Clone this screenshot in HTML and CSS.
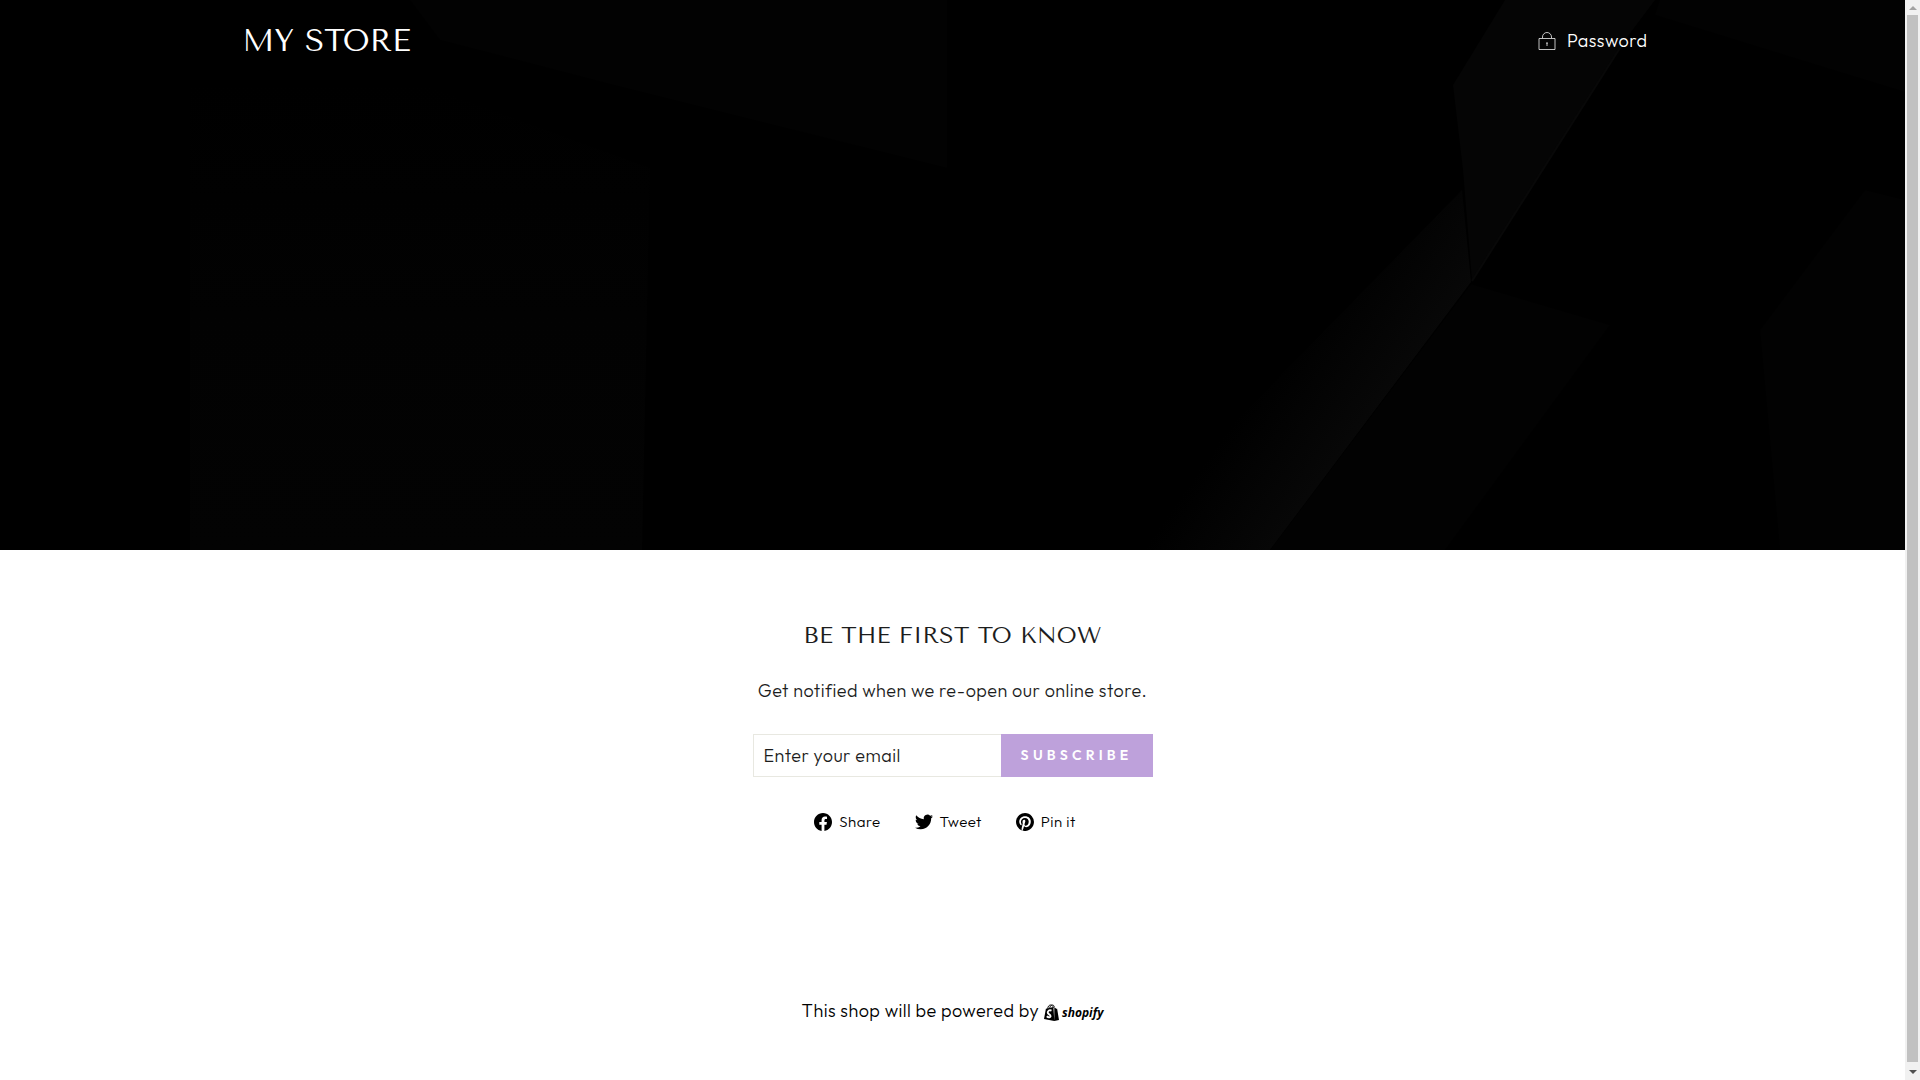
FILE: index.html
```
<!DOCTYPE html>
<html lang="en">
<head>
  <meta charset="UTF-8">
  <meta name="viewport" content="width=device-width, initial-scale=1">
  <title>My Store</title>
  <link rel="stylesheet" href="styles.css">
</head>
<body>
  <div class="page">
    <div class="hero">
      <svg class="hero-image" viewBox="0 0 1905 550" preserveAspectRatio="xMidYMid slice" aria-hidden="true">
        <defs>
          <linearGradient id="glow" gradientUnits="userSpaceOnUse" x1="1270" y1="370" x2="1378" y2="446">
            <stop offset="0" stop-color="#000"/>
            <stop offset="1" stop-color="#090909"/>
          </linearGradient>
          <linearGradient id="wall" x1="0" y1="0" x2="0" y2="1">
            <stop offset="0" stop-color="#000"/>
            <stop offset="0.5" stop-color="#020202"/>
            <stop offset="1" stop-color="#030303"/>
          </linearGradient>
        </defs>
        <path fill="#020202" d="M410 0h537v168L610 84 440 40z"/>
        <path fill="url(#wall)" d="M190 82h225l235 86-8 382H190z"/>
        <path fill="url(#glow)" d="M1462 190l9 92-201 268h-160z"/>
        <path fill="#050505" d="M1505 0h150l-30 40-153 241-9-111-10-85z"/>
        <path stroke="#080808" stroke-width="2" d="M1625 40l-153 241"/>
        <path fill="#020202" d="M1471 284l139 41-165 225h-175z"/>
        <path fill="#020202" d="M1655 15l250 77V0h-245z"/>
        <path fill="#020202" d="M1865 190l40 10v350h-125l-20-220z"/>
      </svg>
      <header class="header">
        <h1 class="logo">MY STORE</h1>
        <a href="#login" class="password-link">
          <svg class="icon-lock" viewBox="0 0 18 19" aria-hidden="true">
            <path d="M1 6.5h16v11H1z M4.500 6V5a4.500 4.500 0 0 1 9 0v1 M9 11v3 M8 11h2"/>
          </svg>
          <span>Password</span>
        </a>
      </header>
    </div>

    <main class="newsletter">
      <h2>BE THE FIRST TO KNOW</h2>
      <p>Get notified when we re-open our online store.</p>
      <form class="signup">
        <input type="email" placeholder="Enter your email" aria-label="Enter your email">
        <button type="submit">SUBSCRIBE</button>
      </form>
      <div class="sharing">
        <a href="#facebook">
          <svg viewBox="0 0 24 24" aria-hidden="true"><path d="M24 12.070C24 5.400 18.630 0 12 0S0 5.400 0 12.070C0 18.100 4.390 23.090 10.130 24v-8.440H7.080v-3.490h3.050V9.410c0-3.020 1.790-4.690 4.530-4.690 1.310 0 2.690.24 2.690.24v2.970h-1.520c-1.490 0-1.950.93-1.950 1.880v2.260h3.320l-.53 3.490h-2.790V24C19.610 23.090 24 18.100 24 12.070z"/></svg>
          <span>Share</span>
        </a>
        <a href="#twitter">
          <svg viewBox="0 0 24 24" aria-hidden="true"><path d="M23.950 4.570a10 10 0 0 1-2.820.77 4.960 4.960 0 0 0 2.160-2.720c-.95.55-2 .95-3.130 1.180a4.920 4.920 0 0 0-8.380 4.480C7.690 8.090 4.070 6.130 1.640 3.160a4.820 4.820 0 0 0-.67 2.470c0 1.710.87 3.210 2.190 4.100a4.900 4.900 0 0 1-2.230-.62v.06a4.920 4.920 0 0 0 3.950 4.830 5 5 0 0 1-2.210.08 4.940 4.940 0 0 0 4.600 3.420A9.870 9.870 0 0 1 0 19.540a13.990 13.990 0 0 0 7.560 2.210c9.050 0 14-7.500 14-13.980 0-.21 0-.42-.02-.63a9.940 9.940 0 0 0 2.410-2.570z"/></svg>
          <span>Tweet</span>
        </a>
        <a href="#pinterest">
          <svg viewBox="0 0 24 24" aria-hidden="true"><path d="M12 0a12 12 0 0 0-4.370 23.170c-.1-.95-.2-2.400.04-3.440l1.410-5.960s-.36-.72-.36-1.780c0-1.670.97-2.910 2.170-2.910 1.020 0 1.520.77 1.520 1.690 0 1.030-.66 2.570-1 4-.28 1.200.6 2.170 1.780 2.170 2.130 0 3.770-2.250 3.770-5.490 0-2.870-2.060-4.880-5.010-4.880-3.410 0-5.420 2.560-5.420 5.210 0 1.030.4 2.130.9 2.730.1.120.11.230.08.350l-.33 1.360c-.05.220-.17.270-.4.160-1.500-.7-2.440-2.890-2.440-4.650 0-3.790 2.750-7.270 7.940-7.270 4.170 0 7.410 2.970 7.410 6.940 0 4.140-2.610 7.470-6.230 7.470-1.220 0-2.360-.63-2.750-1.380l-.75 2.850c-.27 1.040-1 2.350-1.490 3.150A12 12 0 1 0 12 0z"/></svg>
          <span>Pin it</span>
        </a>
      </div>
    </main>

    <footer class="footer">
      <span>This shop will be powered by</span>
      <a href="#shopify" class="shopify">
        <svg viewBox="0 0 16 18" aria-hidden="true">
          <path d="M2 5l8-2 1 15L0 16z M11 3l2 2h1l2 12-5 1z"/>
          <path class="handle" d="M4 5c0-3 2-4 3-4s3 1 3 3 M6 5c0-2 1-4 3-4 1 0 2 1 2 2"/>
          <path class="mark" d="M8 7C6 6 4 7 4 9c0 2 3 2 3 4 0 1-2 2-4 0"/>
        </svg>
        <span>shopify</span>
      </a>
    </footer>
  </div>

  <div class="scrollbar" aria-hidden="true">
    <span class="arrow up"></span>
    <span class="thumb"></span>
    <span class="arrow down"></span>
  </div>
</body>
</html>
```
FILE: styles.css
```
* {
  box-sizing: border-box;
}

body {
  display: flex;
  margin: 0;
  background: #fff;
  color: #1c1d1d;
  font-family: Outfit, Lato, sans-serif;
  font-size: 18px;
  font-weight: 300;
  line-height: 28px;
  letter-spacing: 0.025em;
}

a {
  color: inherit;
  text-decoration: none;
}

.page {
  flex: 1;
  min-width: 0;
}

/* hero */
.hero {
  position: relative;
  min-height: 550px;
  background: #000;
  color: #fff;
}

.hero-image {
  position: absolute;
  inset: 0;
  width: 100%;
  height: 100%;
}

.header {
  position: relative;
  display: flex;
  align-items: center;
  justify-content: space-between;
  max-width: 1500px;
  min-height: 82px;
  margin: 0 auto;
  padding: 0 55px 0 40px;
}

.logo {
  margin: 0;
  font-family: "Tenor Sans", Lato, sans-serif;
  font-size: 31px;
  font-weight: 400;
  line-height: 40px;
  letter-spacing: 0;
}

.password-link {
  display: flex;
  align-items: center;
  gap: 11px;
}

.icon-lock {
  width: 18px;
  height: 19px;
  fill: none;
  stroke: #fff;
  stroke-opacity: 0.75;
}

/* newsletter */
.newsletter {
  display: flex;
  flex-direction: column;
  align-items: center;
  padding: 69px 20px 0;
  text-align: center;
}

.newsletter h2 {
  margin: 0 0 24px;
  font-family: "Tenor Sans", Lato, sans-serif;
  font-size: 23px;
  font-weight: 400;
  line-height: 34px;
  letter-spacing: 0.01em;
}

.newsletter p {
  margin: 0 0 29px;
}

.signup {
  display: flex;
  width: 100%;
  max-width: 400px;
  height: 43px;
}

.signup input {
  flex: 1;
  min-width: 0;
  padding: 0 10px;
  border: 1px solid #e8e8e1;
  border-right: 0;
  border-radius: 0;
  background: #fff;
  color: #1c1d1d;
  font: inherit;
  letter-spacing: inherit;
}

.signup input::placeholder {
  color: #1c1d1d;
  opacity: 1;
}

.signup button {
  padding: 0 20px 2px;
  border: 0;
  background: #bea1db;
  color: #fff;
  font-family: inherit;
  font-size: 14px;
  font-weight: 600;
  letter-spacing: 0.3em;
  cursor: pointer;
}

.sharing {
  display: flex;
  gap: 34px;
  margin-top: 31px;
  padding-right: 15px;
  color: #000;
  font-size: 15px;
}

.sharing a {
  display: flex;
  align-items: center;
  gap: 7px;
}

.sharing svg {
  width: 18px;
  height: 18px;
}

/* footer */
.footer {
  display: flex;
  align-items: center;
  justify-content: center;
  gap: 5px;
  padding: 161px 20px 55px;
  color: #000;
}

.shopify {
  display: flex;
  align-items: center;
  gap: 3px;
  padding-top: 3px;
  font-family: "Open Sans", sans-serif;
  font-size: 12px;
  font-style: italic;
  font-weight: 700;
  line-height: 18px;
  letter-spacing: 0;
}

.shopify svg {
  width: 15px;
  height: 17px;
}

.shopify .handle {
  fill: none;
  stroke: #000;
}

.shopify .mark {
  fill: none;
  stroke: #fff;
  stroke-width: 2;
}

/* scrollbar */
.scrollbar {
  position: sticky;
  top: 0;
  display: flex;
  flex-direction: column;
  align-items: center;
  justify-content: space-between;
  width: 15px;
  height: 100vh;
  padding: 6px 0;
  background: #f1f1f1;
}

.thumb {
  flex: 1;
  width: 11px;
  margin: 5px 0 8px;
  background: #c1c1c1;
}

.arrow {
  border: 4px solid transparent;
}

.arrow.up {
  border-top: 0;
  border-bottom-color: #a3a3a3;
}

.arrow.down {
  border-bottom: 0;
  border-top-color: #505050;
}
```
